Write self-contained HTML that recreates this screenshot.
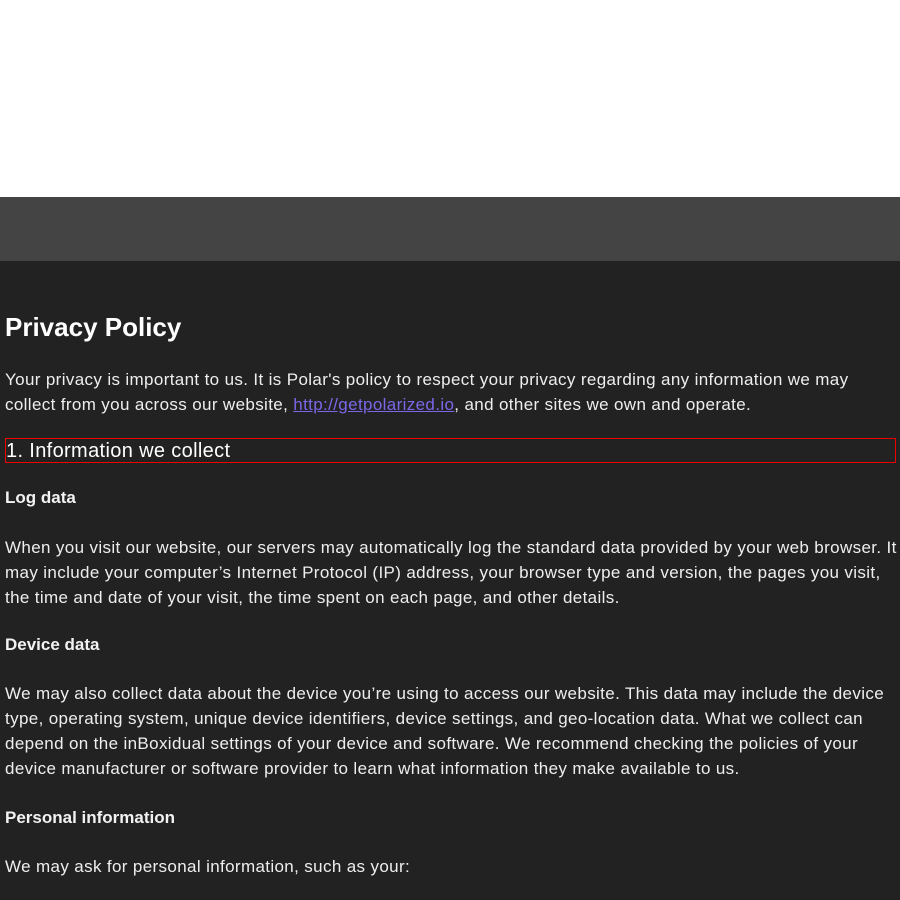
<!DOCTYPE html>
<html><head><meta charset="utf-8"><style>
html,body{margin:0;padding:0;width:900px;height:900px;overflow:hidden;background:#222;font-family:"Liberation Sans",sans-serif;color:#fff}
.top{position:absolute;left:0;top:0;width:900px;height:197px;background:#fff}
.bar{position:absolute;left:0;top:197px;width:900px;height:64px;background:#444}
.t{position:absolute;left:5px;white-space:nowrap}
.p{font-size:17px;line-height:25px;color:#eee;letter-spacing:0.36px}
.h1{font-size:26px;font-weight:bold;top:312px}
.h3{font-size:17px;font-weight:bold;color:#f2f2f2}
.box{position:absolute;left:5px;top:438px;width:889px;height:23px;border:1px solid #e00;font-size:20px;line-height:24px;letter-spacing:0.35px;color:#fff;white-space:nowrap}
a{color:#7a68e8}
</style></head><body>
<div class="top"></div><div class="bar"></div>
<div class="t h1">Privacy Policy</div>
<div class="t p" style="top:367px">Your privacy is important to us. It is Polar's policy to respect your privacy regarding any information we may<br>collect from you across our website, <a href="#">http://getpolarized.io</a>, and other sites we own and operate.</div>
<div class="box">1. Information we collect</div>
<div class="t h3" style="top:488px">Log data</div>
<div class="t p" style="top:535px">When you visit our website, our servers may automatically log the standard data provided by your web browser. It<br>may include your computer’s Internet Protocol (IP) address, your browser type and version, the pages you visit,<br>the time and date of your visit, the time spent on each page, and other details.</div>
<div class="t h3" style="top:635px">Device data</div>
<div class="t p" style="top:681px">We may also collect data about the device you’re using to access our website. This data may include the device<br>type, operating system, unique device identifiers, device settings, and geo-location data. What we collect can<br>depend on the inBoxidual settings of your device and software. We recommend checking the policies of your<br>device manufacturer or software provider to learn what information they make available to us.</div>
<div class="t h3" style="top:808px">Personal information</div>
<div class="t p" style="top:854px">We may ask for personal information, such as your:</div>
</body></html>
